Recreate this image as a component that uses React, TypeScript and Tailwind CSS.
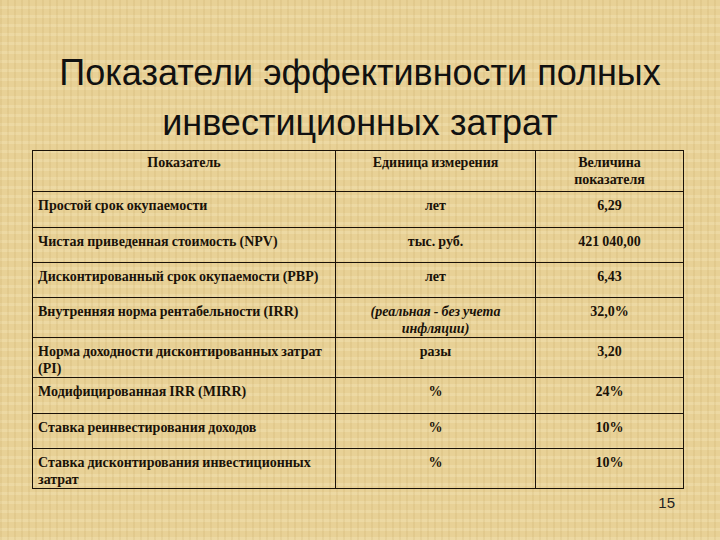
const rows: { name: string; unit: string; value: string; h: string; italic?: boolean }[] = [
  { name: 'Простой срок окупаемости', unit: 'лет', value: '6,29', h: 'h-[36px]' },
  { name: 'Чистая приведенная стоимость (NPV)', unit: 'тыс. руб.', value: '421 040,00', h: 'h-[35px]' },
  { name: 'Дисконтированный срок окупаемости (PBP)', unit: 'лет', value: '6,43', h: 'h-[35px]' },
  {
    name: 'Внутренняя норма рентабельности (IRR)',
    unit: '(реальная - без учета инфляции)',
    value: '32,0%',
    h: 'h-[40px]',
    italic: true,
  },
  { name: 'Норма доходности дисконтированных затрат (PI)', unit: 'разы', value: '3,20', h: 'h-[40px]' },
  { name: 'Модифицированная IRR (MIRR)', unit: '%', value: '24%', h: 'h-[36px]' },
  { name: 'Ставка реинвестирования доходов', unit: '%', value: '10%', h: 'h-[35px]' },
  { name: 'Ставка дисконтирования инвестиционных затрат', unit: '%', value: '10%', h: 'h-[40px]' },
];

const cell = "border border-[#1b1208] align-top font-['Liberation_Serif','Times_New_Roman',serif] font-bold";

export default function App() {
  return (
    <div className="w-[720px] h-[540px] overflow-hidden bg-[#e8d196] bg-[repeating-linear-gradient(90deg,rgba(150,110,30,0.08)_0px,rgba(150,110,30,0.08)_2px,transparent_2px,transparent_7px),repeating-linear-gradient(0deg,rgba(255,248,215,0.2)_0px,rgba(255,248,215,0.2)_3px,transparent_3px,transparent_9px)]">
      {/* Title */}
      <div className="pt-[48px] text-center font-['Liberation_Sans',Arial,sans-serif] text-[36px] leading-[50px] text-[#111]">
        <div>Показатели эффективности полных</div>
        <div>инвестиционных затрат</div>
      </div>

      {/* Table */}
      <div className="pl-[32px] pt-[2px]">
        <table className="w-[651px] table-fixed border-collapse text-[14px] leading-[17px] text-[#1a1208] [word-spacing:-0.5px]">
          <colgroup>
            <col className="w-[303px]" />
            <col className="w-[200px]" />
            <col className="w-[148px]" />
          </colgroup>
          <thead>
            <tr className="h-[41px]">
              <th className={`${cell} pt-[3px] px-[5px] text-center`}>Показатель</th>
              <th className={`${cell} pt-[3px] px-[5px] text-center`}>Единица измерения</th>
              <th className={`${cell} pt-[3px] px-[5px] text-center`}>
                Величина
                <br />
                показателя
              </th>
            </tr>
          </thead>
          <tbody>
            {rows.map((r) => (
              <tr key={r.name} className={r.h}>
                <td className={`${cell} pt-[5px] pl-[5px] pr-[1px] text-left`}>{r.name}</td>
                <td
                  className={
                    r.italic ? `${cell} pt-[5px] px-[18px] text-center italic` : `${cell} pt-[5px] px-[5px] text-center`
                  }
                >
                  {r.unit}
                </td>
                <td className={`${cell} pt-[5px] px-[5px] text-center`}>{r.value}</td>
              </tr>
            ))}
          </tbody>
        </table>
      </div>

      {/* Slide number */}
      <div className="flex justify-end pr-[45px] pt-[4px] font-['Liberation_Sans',Arial,sans-serif] text-[15px] leading-[20px] text-[#222]">
        15
      </div>
    </div>
  );
}
